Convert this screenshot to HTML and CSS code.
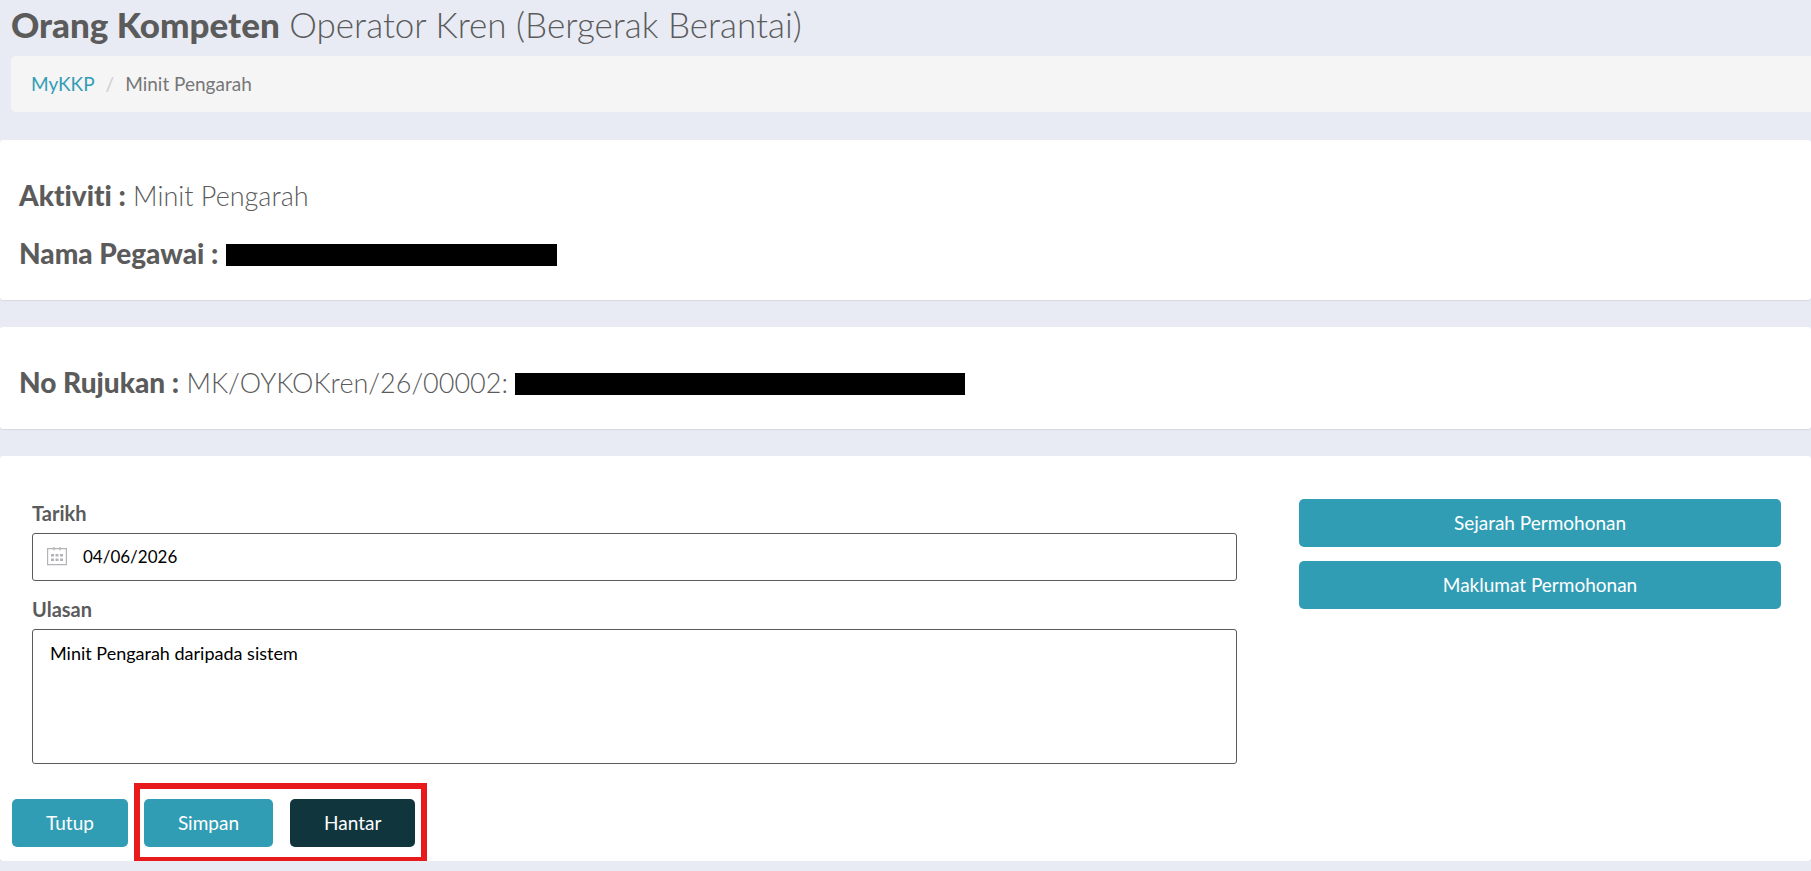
FILE: index.html
```html
<!DOCTYPE html>
<html lang="ms">
<head>
<meta charset="utf-8">
<title>Minit Pengarah</title>
<link rel="stylesheet" href="styles.css">
</head>
<body>
<header class="page-header">
  <h1 class="page-title"><strong>Orang Kompeten</strong> Operator Kren (Bergerak Berantai)</h1>
  <nav class="breadcrumb" aria-label="Breadcrumb">
    <a class="breadcrumb-link" href="#">MyKKP</a>
    <span class="breadcrumb-separator">/</span>
    <span>Minit Pengarah</span>
  </nav>
</header>
<main class="panels">
  <section class="panel panel-info">
    <h2 class="info-line"><strong>Aktiviti :</strong> Minit Pengarah</h2>
    <h2 class="info-line"><strong>Nama Pegawai :</strong> <span class="redacted redacted-name"></span></h2>
  </section>
  <section class="panel panel-info">
    <h2 class="info-line"><strong>No Rujukan :</strong> MK/OYKOKren/26/00002: <span class="redacted redacted-reference"></span></h2>
  </section>
  <form class="panel">
    <div class="form-grid">
      <div class="fields">
        <label class="field-label" for="tarikh">Tarikh</label>
        <div class="date-field">
          <svg class="date-icon" viewBox="0 0 20 20" aria-hidden="true">
            <path d="M.6 1.6h18.800v16H.6zM7 0v3.600M13 0v3.600" fill="none" stroke="#b3b3b7" stroke-width="1.2"/>
            <path d="M4 7h3v2.500H4zM8.500 7h3v2.500h-3zM13 7h3v2.500h-3zM4 11.500h3V14H4zM8.500 11.500h3V14h-3zM13 11.500h3V14h-3z" fill="#b3b3b7"/>
          </svg>
          <input class="date-input" id="tarikh" type="text" value="04/06/2026">
        </div>
        <label class="field-label" for="ulasan">Ulasan</label>
        <textarea class="comment" id="ulasan" rows="4">Minit Pengarah daripada sistem</textarea>
      </div>
      <div class="side-actions">
        <button class="button" type="button">Sejarah Permohonan</button>
        <button class="button" type="button">Maklumat Permohonan</button>
      </div>
    </div>
    <div class="actions">
      <button class="button" type="button">Tutup</button>
      <div class="highlighted-actions">
        <button class="button" type="button">Simpan</button>
        <button class="button button-dark" type="submit">Hantar</button>
      </div>
    </div>
  </form>
</main>
</body>
</html>
```
FILE: styles.css
```css
* { box-sizing: border-box; }

body {
  margin: 0;
  background: #e8ebf4;
  color: #5b5b5c;
  font-family: Lato, "Liberation Sans", sans-serif;
  font-size: 19px;
  font-variant-ligatures: none;
  line-height: 28px;
}

.page-header { padding: 3px 0 28px 11px; }

.page-title {
  margin: 0 0 11px;
  font-size: 35px;
  font-weight: 300;
  line-height: 42px;
}

.page-title strong { font-weight: 900; }

.breadcrumb {
  display: flex;
  gap: 11px;
  padding: 14px 20px;
  border-radius: 5px 0 0 5px;
  background: #f5f5f5;
  color: #777;
}

.breadcrumb-link { color: #319db5; text-decoration: none; }
.breadcrumb-separator { color: #ccc; }

.panels { display: grid; gap: 27px; }

.panel {
  border-radius: 3px;
  background: #fff;
  box-shadow: 0 1px 1px rgba(0, 0, 0, .08);
}

.panel-info {
  display: grid;
  gap: 24px;
  padding: 39px 19px 29px;
}

.info-line {
  margin: 0;
  font-size: 27px;
  font-weight: 300;
  line-height: 34px;
}

.info-line strong {
  font-size: 28px;
  font-weight: 900;
  line-height: 1;
}

.redacted {
  display: inline-block;
  height: 22px;
  background: #000;
  vertical-align: -2px;
}

.redacted-name { width: 331px; }
.redacted-reference { width: 450px; }

.form-grid {
  display: grid;
  grid-template-columns: 5fr 2fr;
  gap: 62px;
  padding: 43px 30px 0 32px;
}

.fields { display: flex; flex-direction: column; }

.field-label {
  margin-bottom: 6px;
  font-size: 20px;
  font-weight: 700;
}

.date-field {
  display: flex;
  align-items: center;
  gap: 16px;
  height: 48px;
  margin-bottom: 14px;
  padding: 0 14px;
  border: 1px solid #5b5b5c;
  border-radius: 3px;
}

.date-icon { width: 20px; height: 20px; }

.date-input {
  flex: 1;
  padding: 0;
  border: 0;
  outline: 0;
  color: #000;
  font: inherit;
  font-size: 17px;
}

.comment {
  display: block;
  width: 100%;
  padding: 10px 17px 19px;
  border: 1px solid #5b5b5c;
  border-radius: 3px;
  resize: none;
  color: #000;
  font: inherit;
  font-size: 18px;
  line-height: 26px;
}

.side-actions {
  display: flex;
  flex-direction: column;
  gap: 14px;
}

.button {
  padding: 10px 34px;
  border: 0;
  border-radius: 5px;
  background: #319db5;
  color: #fff;
  font: inherit;
}

.button-dark { background: #10353d; }

.actions {
  display: flex;
  gap: 16px;
  padding: 35px 12px 14px;
}

.highlighted-actions {
  position: relative;
  display: flex;
  gap: 17px;
}

.highlighted-actions::before {
  content: "";
  position: absolute;
  inset: -16px -12px -16px -10px;
  border: 6px solid #e71b1b;
  pointer-events: none;
}
```
